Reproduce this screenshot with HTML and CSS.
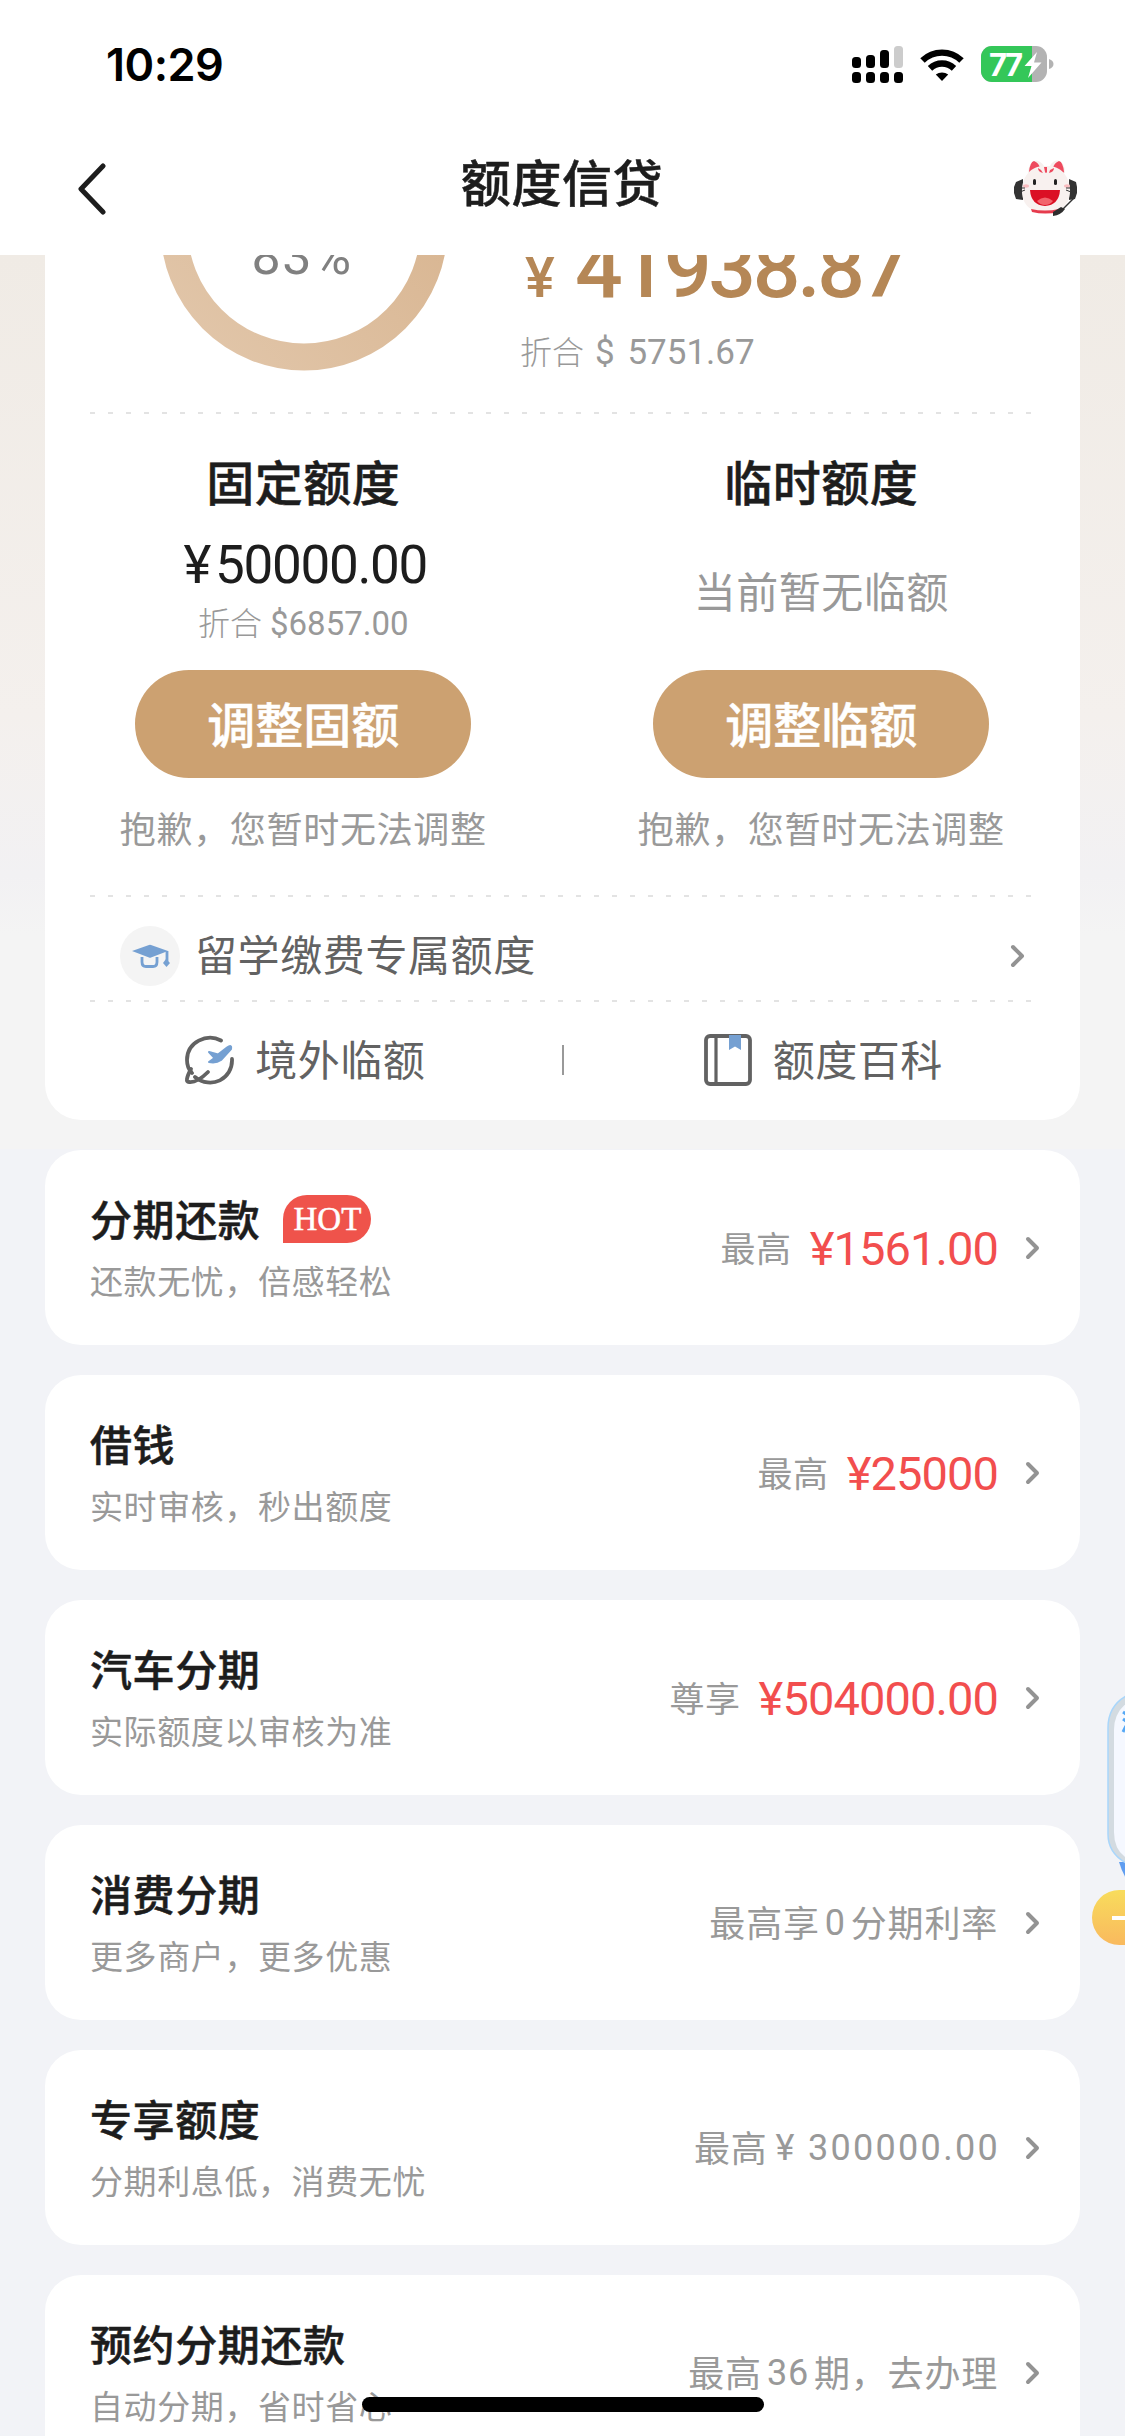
FILE: index.html
```html
<!DOCTYPE html>
<html lang="zh-CN">
<head>
<meta charset="utf-8">
<title>额度信贷</title>
<link rel="stylesheet" href="styles.css">
</head>
<body>
<div class="phone">
  <header class="top">
    <div class="status">
      <span class="time">10:29</span>
      <svg class="status-icons" width="206" height="40" viewBox="0 0 206 40">
        <g fill="#000">
          <rect x="0" y="11" width="9" height="11" rx="3.5"/><rect x="14" y="9" width="9" height="13" rx="3.5"/><rect x="28" y="4" width="9" height="18" rx="3.5"/>
          <rect x="0" y="26" width="9" height="11" rx="3.5"/><rect x="14" y="26" width="9" height="11" rx="3.5"/><rect x="28" y="26" width="9" height="11" rx="3.5"/><rect x="42" y="26" width="9" height="11" rx="3.5"/>
        </g>
        <rect x="42" y="0" width="9" height="22" rx="3.5" fill="#ccc"/>
        <path d="M90 35 83.800 28.600A10 10 0 0 1 96.200 28.600Z"/>
        <path d="M70.500 14.500A28 28 0 0 1 109.500 14.500M78 22.300A17.500 17.500 0 0 1 102 22.300" fill="none" stroke="#000" stroke-width="6.400"/>
        <clipPath id="cell"><rect x="129" y="0" width="66" height="36" rx="11"/></clipPath>
        <g clip-path="url(#cell)"><rect x="129" width="66" height="36" fill="#b3b3b3"/><rect x="129" width="51" height="36" fill="#34c759"/></g>
        <path d="M197 13q4.500 1.500 4.500 5t-4.500 5z" fill="#b3b3b3"/>
        <text class="level" x="137" y="29.500" textLength="34">77</text>
        <path d="M185 6 172.500 20H179.500L176 32 189.500 16.500H182Z" fill="#fff"/>
      </svg>
    </div>
    <div class="nav">
      <svg class="back" width="30" height="52" viewBox="0 0 30 52"><path d="M26 3 4 26 26 49" fill="none" stroke="#1d1d1d" stroke-width="5" stroke-linecap="round" stroke-linejoin="round"/></svg>
      <h1>额度信贷</h1>
      <svg class="cat" width="64" height="58" viewBox="0 0 64 58">
        <path d="M14 14Q15 2 22 1.500 27 2 30 7H36Q39 1 44 1.500 51 3 51 14Z" fill="#f6efed"/>
        <path d="M15 13Q16 3 20 2 25 4 26 9L17 15ZM50 13Q49 3 45 2 40 4 39 9L48 15Z" fill="#ee4a5e"/>
        <path d="M2 23 9 20V41L2 40 0 34V28ZM62 23 55 20V41L61 40 63 34V28Z" fill="#333"/>
        <path d="M32 7C46 6 55 16 56 30 57 45 47 54 32 54S7 45 8 30C9 16 18 6 32 7Z" fill="#f8f1ef"/>
        <path d="M24 9 27 11 29 14Q24 13 24 9ZM30 8H33V13Q32 15 31 13ZM40 9 36 11 35 14Q40 13 40 9Z" fill="#ee4a5e"/>
        <ellipse cx="12" cy="27" rx="3" ry="1.700" fill="#f9bcbf"/><ellipse cx="53" cy="27" rx="3" ry="1.700" fill="#f9bcbf"/>
        <rect x="19" y="20" width="3" height="6" rx="1.500" fill="#222"/><rect x="40" y="20" width="3" height="6" rx="1.500" fill="#222"/>
        <path d="M16 31H46Q45 46 31 47 17 46 16 31Z" fill="#db1024"/><path d="M23 42Q31 35 39 42 36 46 31 46 26 46 23 42Z" fill="#f2646c"/>
        <path d="M17 50Q31 53 45 50V53Q31 56 18 53Z" fill="#e63b4d"/>
        <path d="M5 29H11M6 33 11 31M52 29H58M52 31 57 33" stroke="#333" stroke-width="1"/>
        <path d="M60 39 47 52" stroke="#333" stroke-width="1.500" fill="none"/><path d="M39 53 47 48 51 50Q47 56 39 57Z" fill="#2e2e2e"/>
      </svg>
    </div>
  </header>

  <main class="scroll">
    <section class="quota card">
      <div class="summary">
        <div class="gauge">
          <svg width="288" height="288" viewBox="0 0 288 288">
            <defs><linearGradient id="gold" x1="0" y1="1" x2="1" y2="0"><stop offset="0" stop-color="#e2c7ab"/><stop offset="1" stop-color="#d6b18b"/></linearGradient></defs>
            <circle cx="144" cy="144" r="130" fill="none" stroke="url(#gold)" stroke-width="27"/>
          </svg>
          <span class="percent">83%</span>
        </div>
        <div class="available">
          <div class="total"><span class="yen">¥</span><span class="big">41938.87</span></div>
          <div class="usd">折合 <span class="num">$ 5751.67</span></div>
        </div>
      </div>
      <div class="dash"></div>
      <div class="limits">
        <div class="limit">
          <h2>固定额度</h2>
          <div class="worth">
            <div class="fixed"><span>¥</span>50000.00</div>
            <div class="usd small">折合 <span class="num">$6857.00</span></div>
          </div>
          <button>调整固额</button>
          <p>抱歉，您暂时无法调整</p>
        </div>
        <div class="limit">
          <h2>临时额度</h2>
          <div class="worth none">当前暂无临额</div>
          <button>调整临额</button>
          <p>抱歉，您暂时无法调整</p>
        </div>
      </div>
      <div class="dash"></div>
      <div class="study">
        <svg width="60" height="60" viewBox="0 0 60 60">
          <circle cx="30" cy="30" r="30" fill="#f4f4f4"/>
          <path d="M12 25 29 19Q30 18.600 31 19L48 25 31 31.500Q30 32 29 31.500Z" fill="#75a0d2"/>
          <path d="M22 31V36Q22 40.500 26 40.500H33Q37 40.500 37 36V31M47 25V36" fill="none" stroke="#75a0d2" stroke-width="2.800"/><path d="M46 33 50 37 46.500 41 43 37Z" fill="#75a0d2"/>
        </svg>
        <span>留学缴费专属额度</span>
        <svg class="chev" width="16" height="24" viewBox="0 0 16 24"><path d="M3 3 12 12 3 21" /></svg>
      </div>
      <div class="dash"></div>
      <div class="links">
        <div class="link">
          <svg width="52" height="52" viewBox="0 0 52 52" fill="none" stroke="#626262" stroke-width="3.800" stroke-linecap="round">
            <path d="M38 6.500C24-1 4 8 4 26 4 32 6 36 9 39M49 25C50 45 28 56 12 43"/><path d="M8 35Q1 48 6 48 14 49 25 38"/>
            <path d="M26 18 35 20.500 44 13.500Q49 10 48 15L38 26Q33 29.500 26 28L31.500 24Z" fill="#75a0d2" stroke="#75a0d2" stroke-width="2" stroke-linejoin="round"/>
          </svg>
          <span>境外临额</span>
        </div>
        <i></i>
        <div class="link">
          <svg width="50" height="52" viewBox="0 0 50 52">
            <rect x="3" y="2" width="44" height="48" rx="4" fill="none" stroke="#626262" stroke-width="3.800"/><path d="M13 2V50" stroke="#626262" stroke-width="3.200"/>
            <path d="M26 1H38V16L32 12.500 26 16Z" fill="#75a0d2"/>
          </svg>
          <span>额度百科</span>
        </div>
      </div>
    </section>

    <section class="offer card"><div class="name"><h3>分期还款<b>HOT</b></h3><p>还款无忧，倍感轻松</p></div><div class="value">最高<em>¥1561.00</em></div><svg class="chev" width="16" height="24" viewBox="0 0 16 24"><path d="M3 3 12 12 3 21"/></svg></section>
    <section class="offer card"><div class="name"><h3>借钱</h3><p>实时审核，秒出额度</p></div><div class="value">最高<em>¥25000</em></div><svg class="chev" width="16" height="24" viewBox="0 0 16 24"><path d="M3 3 12 12 3 21"/></svg></section>
    <section class="offer card"><div class="name"><h3>汽车分期</h3><p>实际额度以审核为准</p></div><div class="value">尊享<em>¥504000.00</em></div><svg class="chev" width="16" height="24" viewBox="0 0 16 24"><path d="M3 3 12 12 3 21"/></svg></section>
    <section class="offer card"><div class="name"><h3>消费分期</h3><p>更多商户，更多优惠</p></div><div class="value plain">最高享<span class="n">0</span>分期利率</div><svg class="chev" width="16" height="24" viewBox="0 0 16 24"><path d="M3 3 12 12 3 21"/></svg></section>
    <section class="offer card"><div class="name"><h3>专享额度</h3><p>分期利息低，消费无忧</p></div><div class="value plain">最高<span class="n wide">¥ 300000.00</span></div><svg class="chev" width="16" height="24" viewBox="0 0 16 24"><path d="M3 3 12 12 3 21"/></svg></section>
    <section class="offer card"><div class="name"><h3>预约分期还款</h3><p>自动分期，省时省心</p></div><div class="value plain">最高<span class="n">36</span>期，去办理</div><svg class="chev" width="16" height="24" viewBox="0 0 16 24"><path d="M3 3 12 12 3 21"/></svg></section>
  </main>

  <svg class="floater" width="33" height="256" viewBox="0 0 33 256">
    <defs><linearGradient id="coin" x1="0" y1="0" x2="0" y2="1"><stop offset="0" stop-color="#f8dc5c"/><stop offset="1" stop-color="#f9b95e"/></linearGradient></defs>
    <path d="M27 172H35V190Q30 182 27 172Z" fill="#5f9df0"/>
    <path d="M36 5Q16 15 16 38V144Q16 164 36 174Z" fill="#d3dbe1" stroke="#a9d6fb" stroke-width="1.500"/>
    <path d="M36 12Q22 22 22 40V142Q22 161 36 169Z" fill="#f5f8ff"/>
    <path d="M31 22 34 24M31 29 34 31M31 42 34 36" stroke="#55a8f5" stroke-width="3"/>
    <path d="M36 200H27.500A27.500 27.500 0 0 0 27.500 255H36Z" fill="url(#coin)"/><path d="M20 228H35" stroke="#fff" stroke-width="4"/>
  </svg>
  <div class="home"></div>
</div>
</body>
</html>
```
FILE: styles.css
```css
* { box-sizing: border-box; margin: 0; padding: 0; }
body { font-family: "Noto Sans CJK SC", sans-serif; }
.phone { position: relative; display: flex; flex-direction: column; width: 1125px; height: 2436px; overflow: hidden; background: #fff; }
h1, h2, h3, button { -webkit-text-stroke: 0.500px currentColor; }

.top { flex: none; height: 255px; background: #fff; }
.status { display: flex; justify-content: space-between; padding: 45px 65px 0 106px; height: 128px; }
.time { font: 600 45px/40px Inter, sans-serif; letter-spacing: -0.500px; }
.status-icons { margin: 1px 2px 0 0; }
.level { font: 700 31px Inter, sans-serif; fill: #fff; }
.nav { display: flex; align-items: center; justify-content: space-between; height: 120px; padding: 0 47px 0 77px; }
.nav h1 { margin-left: 3px; padding-bottom: 16px; font-size: 50px; line-height: 60px; font-weight: 500; letter-spacing: 0.600px; color: #1d1d1d; }
.back { margin-top: 2px; }

.scroll { flex: 1; display: flex; flex-direction: column; gap: 30px; padding: 0 45px; overflow: hidden; background: linear-gradient(#f0ebe5 0, #f4f0ed 460px, #f2f1f3 620px, #f4f4f4 680px, #f4f4f4 894px, #f2f3f7 894px); }
.card { flex: none; background: #fff; border-radius: 36px; }
.quota { height: 865px; border-radius: 0 0 36px 36px; }
.dash { height: 2px; margin: 0 45px; background: repeating-linear-gradient(90deg, #e3e3e3 0 5px, transparent 5px 18px); }

.summary { display: flex; height: 157px; align-items: flex-end; padding: 0 0 41px 115px; }
.gauge { display: grid; place-items: center; }
.gauge > * { grid-area: 1 / 1; }
.percent { font: 400 52px/50px Roboto, sans-serif; letter-spacing: 1.500px; color: #808080; margin: 60px 4px 0 0; }
.available { margin: 0 0 -2px 72px; }
.total { display: flex; align-items: baseline; line-height: 80px; font-family: Roboto, sans-serif; color: #b58756; }
.yen { padding-left: 5px; font-size: 56px; font-weight: 500; width: 55px; letter-spacing: -3px; }
.big { font-size: 84px; font-weight: 500; letter-spacing: -3.300px; }
.usd { font-size: 32px; line-height: 40px; font-weight: 300; color: #999; margin-top: 12px; }
.num { margin-left: 4px; word-spacing: 4px; font-family: Roboto, sans-serif; font-weight: 400; font-size: 35px; }

.limits { display: grid; grid-template-columns: 1fr 1fr; height: 481px; }
.limit { display: flex; flex-direction: column; align-items: center; }
.limit:first-child { margin-left: -1px; }
.limit h2 { margin-top: 36px; font-size: 48px; line-height: 60px; font-weight: 500; letter-spacing: 0.500px; color: #1d1d1d; }
.worth { height: 160px; padding-top: 28px; text-align: center; }
.fixed { padding-left: 4px; font: 400 53px/54px Roboto, sans-serif; letter-spacing: -1.300px; color: #1d1d1d; }
.fixed span { margin-right: 5px; }
.small { margin-top: 9px; }
.small .num { margin-left: 1px; font-size: 33px; }
.none { padding-top: 25px; font-size: 42px; line-height: 110px; letter-spacing: 0.500px; color: #999; }
button { width: 336px; height: 108px; padding-bottom: 4px; border: 0; border-radius: 54px; background: #cca171; color: #fff; font: 500 48px/104px "Noto Sans CJK SC", sans-serif; }
.limit p { margin-top: 29px; font-size: 36px; line-height: 40px; letter-spacing: 0.700px; color: #999; }

.study { display: flex; align-items: center; height: 103px; padding: 14px 54px 0 75px; font-size: 42px; color: #626262; }
.study span { flex: 1; margin-left: 15px; padding-bottom: 6px; letter-spacing: 0.600px; }
.chev { flex: none; fill: none; stroke: #939393; stroke-width: 4; stroke-linecap: round; stroke-linejoin: round; }
.links { display: grid; grid-template-columns: 1fr 2px 1fr; align-items: center; height: 118px; padding-bottom: 2px; font-size: 42px; letter-spacing: 0.500px; color: #626262; }
.link { display: flex; align-items: center; justify-content: center; gap: 20px; padding-left: 2px; }
.link span { padding-bottom: 5px; }
.links i { height: 30px; background: #999; }

.offer { display: flex; align-items: center; height: 195px; padding: 0 39px 0 45px; }
.name { flex: 1; }
.name h3 { display: flex; align-items: center; height: 60px; margin-top: -5px; font-size: 42px; font-weight: 500; letter-spacing: 0.600px; color: #1d1d1d; }
.name b { width: 88px; height: 48px; margin: 3px 0 0 23px; border-radius: 24px 24px 24px 0; background: #ef534b; color: #fff; font: 400 33px/48px "Liberation Serif", serif; letter-spacing: 0; text-align: center; }
.name p { font-size: 33px; line-height: 50px; letter-spacing: 0.600px; color: #999; margin: 8px 0 -2px; }
.value { display: flex; align-items: center; height: 60px; padding-bottom: 3px; font-size: 35px; color: #999; letter-spacing: 0.500px; margin-right: 27px; }
.value em { margin: 5px 0 0 18px; font: 400 47px/60px Roboto, sans-serif; letter-spacing: -0.900px; color: #f24e4e; }
.plain { font-size: 36px; letter-spacing: 0.800px; }
.n { margin: 3px 5px 0 5px; font-family: Roboto, sans-serif; }
.wide { margin-left: 8px; margin-right: -2px; letter-spacing: 2.300px; }

.floater { position: absolute; right: 0; top: 1690px; }
.home { position: absolute; left: 362px; top: 2397px; width: 402px; height: 15px; border-radius: 8px; background: #000; }
```
